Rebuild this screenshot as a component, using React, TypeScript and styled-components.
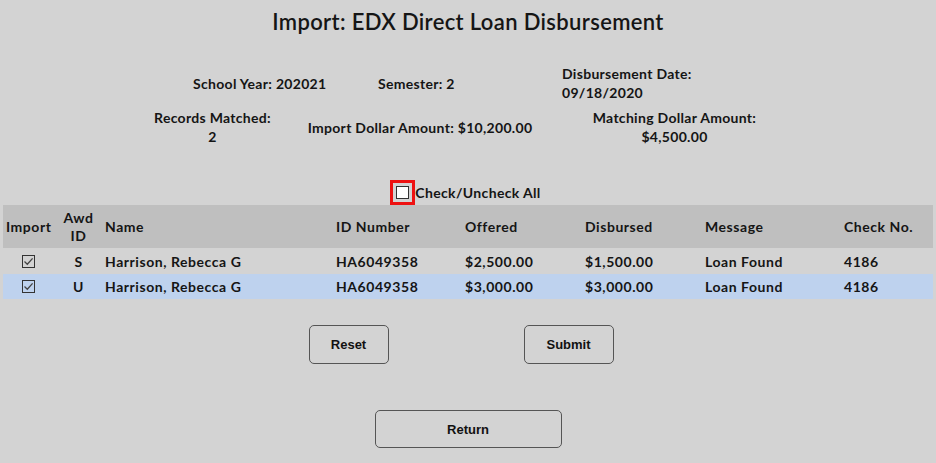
import React from 'react';
import styled, { createGlobalStyle } from 'styled-components';

const GlobalStyle = createGlobalStyle`
  html, body {
    margin: 0;
    padding: 0;
    background: #d3d3d3;
  }
  body {
    font-family: Lato, "Open Sans", sans-serif;
    color: #151515;
  }
`;

const Page = styled.div`
  width: 936px;
  height: 463px;
  display: flex;
  flex-direction: column;
  overflow: hidden;
`;

const Title = styled.h1`
  margin: 9px 0 0;
  font-size: 22px;
  font-weight: 600;
  text-align: center;
  line-height: 25px;
  letter-spacing: 0.35px;
`;

const InfoRow = styled.div<{ $cols: string; $pad: number; $center?: boolean }>`
  display: grid;
  grid-template-columns: ${(p) => p.$cols};
  padding-left: ${(p) => p.$pad}px;
  align-items: center;
  font-size: 14px;
  font-weight: 700;
  line-height: 19px;
  letter-spacing: 0.3px;
  text-align: ${(p) => (p.$center ? 'center' : 'left')};
`;

const CheckAllLine = styled.div`
  display: flex;
  justify-content: center;
  align-items: center;
  margin-top: 34px;
  padding-right: 5px;
  font-size: 14px;
  font-weight: 700;
  letter-spacing: 0.35px;
`;

const Focus = styled.span`
  display: inline-flex;
  padding: 3px;
  border: 3px solid #ee1111;
  margin-right: 0;
`;

const Box = styled.span<{ $fill?: boolean }>`
  display: inline-flex;
  align-items: center;
  justify-content: center;
  width: 11px;
  height: 11px;
  border: 1px solid #333;
  background: ${(p) => (p.$fill ? '#ffffff' : 'transparent')};
`;

const Table = styled.table`
  margin: 0 3px;
  width: 930px;
  border-collapse: collapse;
  table-layout: fixed;
  font-size: 14px;
  font-weight: 700;
  letter-spacing: 0.55px;
`;

const HeadRow = styled.tr`
  background: #bfbfbf;
  height: 43px;
`;

const Th = styled.th<{ $center?: boolean }>`
  padding: 0 3px;
  font-weight: 700;
  line-height: 18px;
  text-align: ${(p) => (p.$center ? 'center' : 'left')};
`;

const BodyRow = styled.tr<{ $selected?: boolean }>`
  height: ${(p) => (p.$selected ? 25 : 26)}px;
  background: ${(p) => (p.$selected ? '#bed2ee' : 'transparent')};
`;

const Td = styled.td<{ $center?: boolean }>`
  padding: 0 3px;
  text-align: ${(p) => (p.$center ? 'center' : 'left')};
  vertical-align: middle;
`;

const CheckCell = styled(Td)`
  padding-left: 0;
  line-height: 0;
  & > span {
    margin-left: 19px;
  }
`;

const ButtonRow = styled.div<{ $gap: number; $top: number; $shift?: number }>`
  display: flex;
  justify-content: center;
  gap: ${(p) => p.$gap}px;
  margin-top: ${(p) => p.$top}px;
  padding-right: ${(p) => p.$shift ?? 0}px;
`;

const Button = styled.button<{ $w: number; $h?: number }>`
  width: ${(p) => p.$w}px;
  height: ${(p) => p.$h ?? 39}px;
  background: #d3d3d3;
  border: 1px solid #555;
  border-radius: 5px;
  font-family: "Liberation Sans", Arial, sans-serif;
  font-size: 13px;
  font-weight: 700;
  color: #111;
  padding: 0;
`;

const Check = () => (
  <svg width="11" height="11" viewBox="0 0 11 11">
    <path d="M1.5 5.5 L4.3 8.2 L9.6 2.4" fill="none" stroke="#444" strokeWidth="1.3" />
  </svg>
);

const rows = [
  { awd: 'S', name: 'Harrison, Rebecca G', id: 'HA6049358', offered: '$2,500.00', disbursed: '$1,500.00', msg: 'Loan Found', check: '4186' },
  { awd: 'U', name: 'Harrison, Rebecca G', id: 'HA6049358', offered: '$3,000.00', disbursed: '$3,000.00', msg: 'Loan Found', check: '4186', selected: true },
];

const widths = [52, 47, 231, 129, 120, 120, 139, 92];

export default function App() {
  return (
    <Page>
      <GlobalStyle />
      <Title>Import: EDX Direct Loan Disbursement</Title>

      <InfoRow $cols="185px 184px auto" $pad={193} style={{ marginTop: 30 }}>
        <div>School Year: 202021</div>
        <div>Semester: 2</div>
        <div>
          Disbursement Date:
          <br />
          09/18/2020
        </div>
      </InfoRow>
      <InfoRow $cols="161px 254px 255px" $pad={132} $center style={{ marginTop: 6 }}>
        <div>
          Records Matched:
          <br />2
        </div>
        <div>Import Dollar Amount: $10,200.00</div>
        <div>
          Matching Dollar Amount:
          <br />
          $4,500.00
        </div>
      </InfoRow>

      <CheckAllLine>
        <Focus>
          <Box $fill />
        </Focus>
        Check/Uncheck All
      </CheckAllLine>

      <Table>
        <colgroup>
          {widths.map((w, i) => (
            <col key={i} style={{ width: w }} />
          ))}
        </colgroup>
        <thead>
          <HeadRow>
            <Th>Import</Th>
            <Th $center>
              Awd
              <br />
              ID
            </Th>
            <Th>Name</Th>
            <Th>ID Number</Th>
            <Th>Offered</Th>
            <Th>Disbursed</Th>
            <Th>Message</Th>
            <Th>Check No.</Th>
          </HeadRow>
        </thead>
        <tbody>
          {rows.map((r, i) => (
            <BodyRow key={i} $selected={r.selected}>
              <CheckCell>
                <Box>
                  <Check />
                </Box>
              </CheckCell>
              <Td $center>{r.awd}</Td>
              <Td>{r.name}</Td>
              <Td>{r.id}</Td>
              <Td>{r.offered}</Td>
              <Td>{r.disbursed}</Td>
              <Td>{r.msg}</Td>
              <Td>{r.check}</Td>
            </BodyRow>
          ))}
        </tbody>
      </Table>

      <ButtonRow $gap={135} $top={26} $shift={14}>
        <Button $w={80}>Reset</Button>
        <Button $w={90}>Submit</Button>
      </ButtonRow>
      <ButtonRow $gap={0} $top={46} $shift={-1}>
        <Button $w={187} $h={38}>
          Return
        </Button>
      </ButtonRow>
    </Page>
  );
}
